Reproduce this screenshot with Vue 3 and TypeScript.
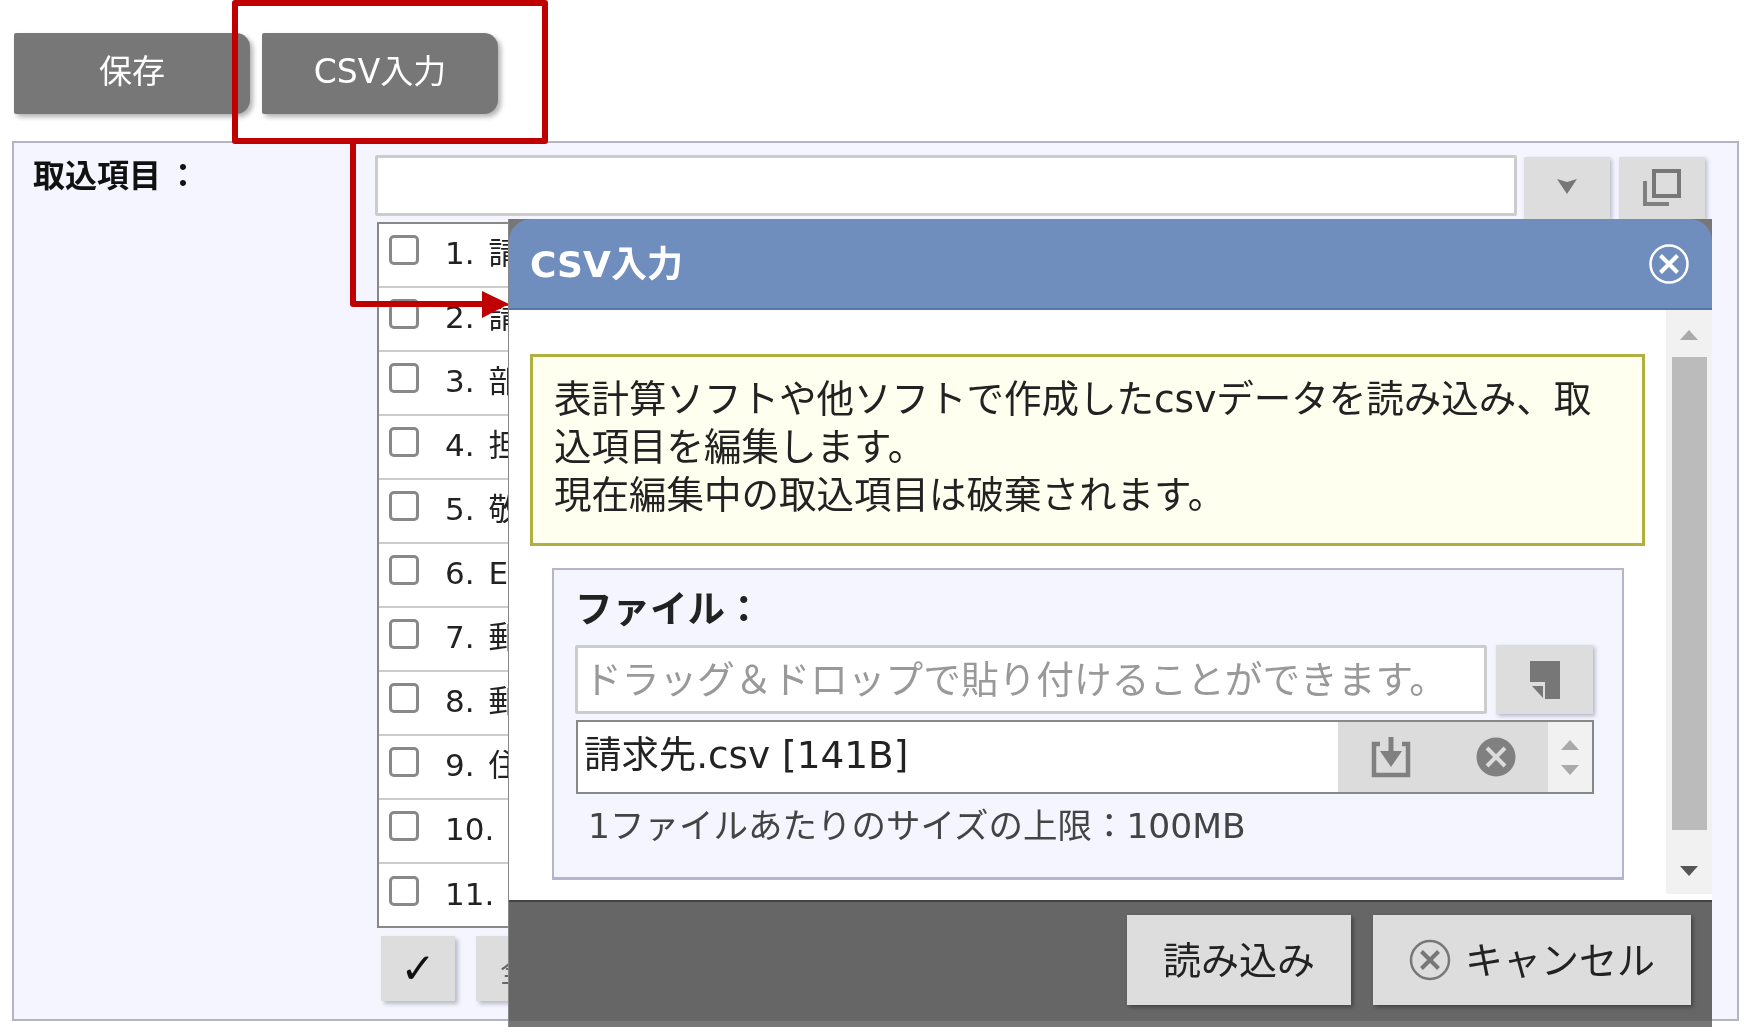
<script setup lang="ts">
const rows: string[] = [
  '1. 請求先コード',
  '2. 請求先名',
  '3. 部署名',
  '4. 担当者名',
  '5. 敬称',
  '6. Eメール',
  '7. 郵便番号',
  '8. 郵便区分',
  '9. 住所',
  '10. 電話番号',
  '11. FAX番号',
]
</script>

<template>
  <div class="page">
    <div class="toolbar">
      <button class="tool-btn">保存</button>
      <button class="tool-btn">CSV入力</button>
    </div>

    <section class="panel">
      <div class="panel-label">取込項目<span class="colon">：</span></div>
      <div class="panel-main">
        <div class="select-row">
          <div class="select-input"></div>
          <button class="small-btn chevron-btn">
            <svg width="20" height="15" viewBox="0 0 20 15"><polygon points="0,0 10,3 20,0 10,15" fill="#777" /></svg>
          </button>
          <button class="small-btn">
            <svg width="38" height="38" viewBox="0 0 38 38" fill="none" stroke="#777" stroke-width="4">
              <rect x="11" y="2" width="25" height="25" />
              <path d="M2 12V35H26" stroke="#808080" />
            </svg>
          </button>
        </div>
        <ul class="item-list">
          <li v-for="row in rows" :key="row" class="item">
            <input type="checkbox" class="check" />
            <span class="item-text">{{ row }}</span>
          </li>
        </ul>
        <div class="list-actions">
          <button class="action-btn check-btn">✓</button>
          <button class="action-btn clear-btn">全解除</button>
        </div>
      </div>
    </section>

    <svg class="callout" width="1751" height="1034" viewBox="0 0 1751 1034" fill="none">
      <rect x="235" y="3" width="310" height="138" stroke="#c00000" stroke-width="6" stroke-linejoin="round" />
      <path d="M353 141V304H484" stroke="#c00000" stroke-width="6" stroke-linejoin="round" />
      <polygon points="482,291 509,304 482,318" fill="#c00000" />
    </svg>

    <div class="modal">
      <header class="modal-head">
        <span class="modal-title">CSV入力</span>
        <svg width="42" height="42" viewBox="0 0 42 42" fill="none" stroke="#fff">
          <circle cx="21" cy="21" r="18.5" stroke-width="2.5" />
          <path d="M12.5 12.5L29.5 29.5M29.5 12.5L12.5 29.5" stroke-width="4" />
        </svg>
      </header>

      <div class="modal-body">
        <div class="modal-content">
          <div class="notice">表計算ソフトや他ソフトで作成したcsvデータを読み込み、取込項目を編集します。<br />現在編集中の取込項目は破棄されます。</div>
          <div class="file-box">
            <div class="file-label">ファイル：</div>
            <div class="drop-row">
              <input class="drop-input" placeholder="ドラッグ＆ドロップで貼り付けることができます。" />
              <button class="paste-btn">
                <svg width="30" height="38" viewBox="0 0 30 38">
                  <polygon points="0,0 30,0 30,38 15,38 15,21 0,21" fill="#777" />
                  <polygon points="2,25 13,25 13,37" fill="#777" />
                </svg>
              </button>
            </div>
            <div class="file-row">
              <span class="file-name">請求先.csv [141B]</span>
              <div class="file-tools">
                <svg width="40" height="42" viewBox="0 0 40 42" fill="none">
                  <path d="M9 8H3V39H37V8H31" stroke="#808080" stroke-width="4.5" />
                  <path d="M20 1V18" stroke="#808080" stroke-width="5" />
                  <polygon points="9,15 31,15 20,31" fill="#808080" />
                </svg>
                <svg width="40" height="40" viewBox="0 0 40 40" fill="none">
                  <circle cx="20" cy="20" r="19.5" fill="#808080" />
                  <path d="M11 11L29 29M29 11L11 29" stroke="#dcdcdc" stroke-width="4" />
                </svg>
              </div>
              <div class="file-spin">
                <span class="tri-up"></span>
                <span class="tri-down"></span>
              </div>
            </div>
            <div class="file-hint">1ファイルあたりのサイズの上限：100MB</div>
          </div>
        </div>
        <div class="scrollbar">
          <span class="tri-up light"></span>
          <div class="thumb"></div>
          <span class="tri-down dark"></span>
        </div>
      </div>

      <footer class="modal-foot">
        <button class="foot-btn read-btn"><span class="foot-text">読み込み</span></button>
        <button class="foot-btn cancel-btn">
          <svg width="42" height="42" viewBox="0 0 42 42" fill="none" stroke="#777">
            <circle cx="21" cy="21" r="19" stroke-width="2.5" />
            <path d="M12.5 12.5L29.5 29.5M29.5 12.5L12.5 29.5" stroke-width="4" />
          </svg>
          <span class="foot-text">キャンセル</span>
        </button>
      </footer>
    </div>
  </div>
</template>

<style>
html,
body {
  margin: 0;
  background: #fff;
}
</style>

<style scoped>
.page {
  position: relative;
  width: 1751px;
  height: 1034px;
  overflow: hidden;
  background: #fff;
  color: #222;
  font-family: "DejaVu Sans", "Noto Sans CJK JP", sans-serif;
  filter: blur(0.5px);
}
button {
  font-family: inherit;
  border: 0;
  padding: 0;
}
.toolbar {
  display: flex;
  gap: 12px;
  height: 141px;
  box-sizing: border-box;
  padding: 33px 0 0 14px;
}
.tool-btn {
  width: 236px;
  height: 81px;
  padding-bottom: 10px;
  background: #777;
  color: #fff;
  font-size: 33px;
  border-radius: 2px 14px 14px 2px;
  box-shadow: 3px 3px 5px rgba(0, 0, 0, 0.3);
}
.panel {
  display: flex;
  box-sizing: border-box;
  height: 880px;
  margin: 0 12px;
  padding-top: 12px;
  background: #f5f5ff;
  border: 2px solid #b4b4c4;
}
.panel-label {
  width: 361px;
  box-sizing: border-box;
  padding: 1px 0 0 19px;
  font-size: 32px;
  font-weight: 700;
  line-height: 40px;
  color: #111;
}
.colon {
  margin-left: 6px;
}
.panel-main {
  width: 1330px;
}
.select-row {
  display: flex;
  align-items: flex-start;
}
.select-input {
  width: 1142px;
  height: 61px;
  box-sizing: border-box;
  background: #fff;
  border: 3px solid #ccc;
  border-radius: 2px;
}
.small-btn {
  display: flex;
  align-items: center;
  justify-content: center;
  width: 86px;
  height: 62px;
  margin-top: 2px;
  margin-left: 9px;
  background: #ddd;
  box-shadow: 2px 2px 4px rgba(80, 80, 110, 0.35);
}
.small-btn:first-of-type {
  margin-left: 7px;
}
.small-btn svg {
  display: block;
}
.chevron-btn svg {
  margin-bottom: 4px;
}
.item-list {
  list-style: none;
  box-sizing: border-box;
  width: 1140px;
  height: 706px;
  margin: 3px 0 0 2px;
  padding: 0;
  background: #fff;
  border: 2px solid #888;
}
.item {
  display: flex;
  align-items: center;
  box-sizing: border-box;
  height: 64px;
  border-bottom: 2px solid #ccc;
}
.item:last-child {
  border-bottom: 0;
}
.check {
  appearance: none;
  flex: none;
  width: 30px;
  height: 30px;
  box-sizing: border-box;
  margin: -10px 0 0 10px;
  background: #fff;
  border: 3px solid #888;
  border-radius: 5px;
}
.item-text {
  margin: -10px 0 0 26px;
  font-size: 31px;
  word-spacing: 4px;
  color: #222;
  white-space: nowrap;
}
.list-actions {
  display: flex;
  gap: 21px;
  margin: 8px 0 0 6px;
}
.action-btn {
  height: 65px;
  background: #ddd;
  font-size: 30px;
  box-shadow: 3px 3px 4px rgba(80, 80, 110, 0.35);
}
.check-btn {
  width: 74px;
  color: #111;
  font-size: 42px;
  font-weight: 700;
  line-height: 65px;
}
.clear-btn {
  width: 160px;
  padding-left: 24px;
  text-align: left;
  color: #666;
}
.callout {
  position: absolute;
  left: 0;
  top: 0;
  pointer-events: none;
}
.modal {
  position: absolute;
  left: 508px;
  top: 219px;
  display: flex;
  flex-direction: column;
  width: 1204px;
  height: 808px;
  box-sizing: border-box;
  background: #777;
  border-left: 1px solid #888;
}
.modal-head {
  display: flex;
  align-items: center;
  justify-content: space-between;
  flex: none;
  height: 91px;
  box-sizing: border-box;
  padding: 0 22px 0 21px;
  background: #6f8dbd;
  border-bottom: 2px solid #5577aa;
  border-radius: 22px 22px 0 0;
}
.modal-title {
  margin-top: -5px;
  color: #fff;
  font-size: 36px;
  font-weight: 700;
}
.modal-body {
  display: flex;
  flex: 1;
  min-height: 0;
  background: #fff;
}
.modal-content {
  flex: 1;
  min-width: 0;
  padding: 44px 0 0 21px;
}
.notice {
  box-sizing: border-box;
  width: 1115px;
  height: 192px;
  padding: 18px 38px 0 21px;
  background: #fffff0;
  border: 3px solid #b0b040;
  font-size: 37.5px;
  line-height: 48px;
  color: #222;
}
.file-box {
  box-sizing: border-box;
  width: 1072px;
  height: 312px;
  margin: 22px 0 0 22px;
  padding: 15px 0 0 21px;
  background: #f5f5ff;
  border: 2px solid #b4b4cc;
  border-bottom-width: 3px;
}
.file-label {
  height: 48px;
  font-size: 37.5px;
  font-weight: 700;
  line-height: 48px;
  color: #222;
}
.drop-row {
  display: flex;
  gap: 9px;
  margin-top: 12px;
}
.drop-input {
  width: 912px;
  height: 69px;
  box-sizing: border-box;
  padding: 0 0 0 6px;
  background: #fff;
  border: 3px solid #ccc;
  border-radius: 2px;
  font-family: inherit;
  font-size: 37.7px;
  outline: none;
}
.drop-input::placeholder {
  color: #999;
  opacity: 1;
}
.paste-btn {
  display: flex;
  align-items: center;
  justify-content: center;
  width: 97px;
  height: 69px;
  background: #ddd;
  box-shadow: 2px 2px 4px rgba(80, 80, 110, 0.4);
}
.file-row {
  display: flex;
  align-items: stretch;
  box-sizing: border-box;
  width: 1018px;
  height: 74px;
  margin: 6px 0 0 1px;
  background: #fff;
  border: 2px solid #888;
}
.file-name {
  flex: 1;
  padding-left: 6px;
  font-size: 37.4px;
  line-height: 66px;
  color: #222;
}
.file-tools {
  display: flex;
  align-items: center;
  justify-content: space-between;
  width: 210px;
  box-sizing: border-box;
  padding: 0 32px 0 33px;
  background: #dcdcdc;
}
.file-spin {
  display: flex;
  flex-direction: column;
  align-items: center;
  justify-content: center;
  gap: 15px;
  width: 44px;
  background: #f1f1f1;
}
.tri-up,
.tri-down {
  width: 0;
  height: 0;
  border-left: 9px solid transparent;
  border-right: 9px solid transparent;
}
.tri-up {
  border-bottom: 10px solid #aaa;
}
.tri-down {
  border-top: 10px solid #aaa;
}
.file-hint {
  margin: 11px 0 0 13px;
  font-size: 34.5px;
  line-height: 42px;
  color: #444;
  white-space: nowrap;
}
.scrollbar {
  display: flex;
  flex-direction: column;
  align-items: center;
  flex: none;
  width: 46px;
  height: 584px;
  box-sizing: border-box;
  padding-top: 20px;
  background: #f1f1f1;
}
.thumb {
  width: 35px;
  height: 473px;
  margin: 17px 0 36px;
  background: #bbb;
}
.tri-down.dark {
  border-top-color: #555;
}
.modal-foot {
  display: flex;
  justify-content: flex-end;
  gap: 22px;
  flex: none;
  height: 127px;
  box-sizing: border-box;
  padding: 13px 21px 0 0;
  background: #666;
  border-top: 2px solid #444;
  border-bottom: 6px solid #777;
}
.foot-btn {
  height: 90px;
  background: #ddd;
  color: #222;
  font-size: 38px;
  box-shadow: 2px 2px 4px rgba(0, 0, 0, 0.35);
}
.foot-text {
  position: relative;
  top: -3px;
}
.read-btn {
  width: 224px;
}
.cancel-btn {
  display: flex;
  align-items: center;
  justify-content: center;
  gap: 14px;
  width: 318px;
}
</style>
